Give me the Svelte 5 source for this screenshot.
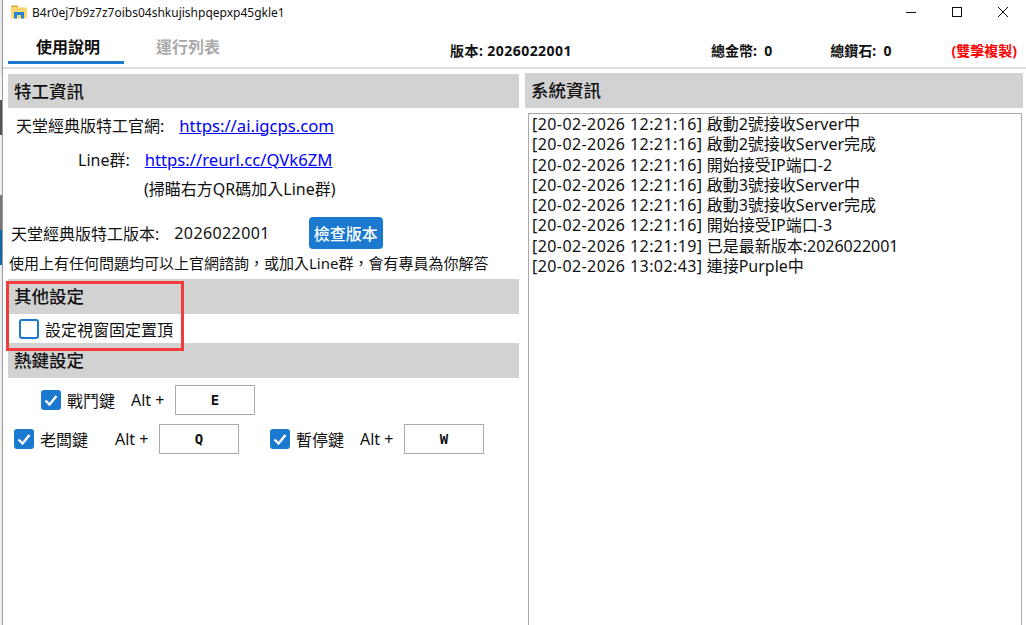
<script>
    const logs = [
        ["[20-02-2026 12:21:16]", "啟動2號接收Server中"],
        ["[20-02-2026 12:21:16]", "啟動2號接收Server完成"],
        ["[20-02-2026 12:21:16]", "開始接受IP端口-2"],
        ["[20-02-2026 12:21:16]", "啟動3號接收Server中"],
        ["[20-02-2026 12:21:16]", "啟動3號接收Server完成"],
        ["[20-02-2026 12:21:16]", "開始接受IP端口-3"],
        ["[20-02-2026 12:21:19]", "已是最新版本:2026022001"],
        ["[20-02-2026 13:02:43]", "連接Purple中"],
    ];
</script>

{#snippet check()}
    <svg class="check" width="20" height="20" viewBox="0 0 20 20">
        <rect width="20" height="20" rx="3" fill="#1b7ad0" />
        <path d="M4.5 10.5l4 4 7-8.5" fill="none" stroke="#fff" stroke-width="2.4" />
    </svg>
{/snippet}

<div class="screen">
    <div class="sliver"></div>
    <div class="window">
        <header class="titlebar">
            <svg class="folder" width="16" height="16" viewBox="0 0 16 16">
                <path d="M0 2.500a1 1 0 0 1 1-1h5l2 2h-8z" fill="#e0a526" />
                <rect x="0" y="3.500" width="16" height="11" rx="1" fill="#ffd76e" />
                <path d="M3 14.500v-6.500h10v6.500h-3v-3.500h-4v3.500z" fill="#1f86d8" />
            </svg>
            <span class="title">B4r0ej7b9z7z7oibs04shkujishpqepxp45gkle1</span>
            <div class="controls">
                <svg width="46" height="22" viewBox="0 0 46 22"><path d="M18 11.500h10" stroke="#111" fill="none" /></svg>
                <svg width="46" height="22" viewBox="0 0 46 22"><rect x="18.500" y="6.500" width="9" height="9" stroke="#111" fill="none" /></svg>
                <svg width="46" height="22" viewBox="0 0 46 22"><path d="M18 6l10 10M28 6l-10 10" stroke="#111" fill="none" /></svg>
            </div>
        </header>

        <nav class="tabs">
            <div class="tab active">使用說明</div>
            <div class="tab">運行列表</div>
            <div class="stat version">版本: 2026022001</div>
            <div class="stat gold">總金幣:&nbsp; 0</div>
            <div class="stat diamond">總鑽石:&nbsp; 0</div>
            <div class="stat copy">(雙擊複製)</div>
        </nav>

        <main class="panels">
            <section class="left">
                <h2 class="head first">特工資訊</h2>
                <div class="row site">
                    <span>天堂經典版特工官網:</span>
                    <a href="#site" class="link">https://ai.igcps.com</a>
                </div>
                <div class="row line">
                    <span>Line群:</span>
                    <a href="#line" class="link">https://reurl.cc/QVk6ZM</a>
                </div>
                <div class="row scan">(掃瞄右方QR碼加入Line群)</div>
                <div class="row ver">
                    <span>天堂經典版特工版本:</span>
                    <span class="ver-no">2026022001</span>
                    <button class="verbtn">檢查版本</button>
                </div>
                <div class="help">使用上有任何問題均可以上官網諮詢，或加入Line群，會有專員為你解答</div>

                <h2 class="head">其他設定</h2>
                <div class="row top">
                    <span class="box"></span>
                    <span>設定視窗固定置頂</span>
                </div>
                <h2 class="head">熱鍵設定</h2>

                <div class="row hot one">
                    {@render check()}
                    <span class="hk-name">戰鬥鍵</span>
                    <span class="alt">Alt +</span>
                    <div class="key">E</div>
                </div>
                <div class="row hot two">
                    {@render check()}
                    <span class="hk-name wide">老闆鍵</span>
                    <span class="alt">Alt +</span>
                    <div class="key">Q</div>
                    {@render check()}
                    <span class="hk-name">暫停鍵</span>
                    <span class="alt">Alt +</span>
                    <div class="key">W</div>
                </div>

                <div class="mark"></div>
            </section>

            <section class="right">
                <h2 class="head first">系統資訊</h2>
                <div class="log">
                    {#each logs as [ts, msg]}
                        <div><span class="ts">{ts}</span> {msg}</div>
                    {/each}
                </div>
            </section>
        </main>
    </div>
</div>

<style>
    :global(body) {
        margin: 0;
        background: #fff;
    }

    .screen {
        display: flex;
        width: 1026px;
        height: 625px;
        overflow: hidden;
        font-family: "Noto Sans", "Noto Sans CJK TC", sans-serif;
        font-size: 16px;
        color: #111;
    }

    .sliver {
        width: 2px;
        flex: none;
        border-right: 1px solid #9a9a9a;
        background: linear-gradient(
            #e8e8e8 0 75px,
            #f4f4f4 75px 100px,
            #555 100px 135px,
            #eee 135px 195px,
            #777 195px 230px,
            #1467a8 230px 265px,
            #eee 265px
        );
    }

    .window {
        flex: 1;
        display: flex;
        flex-direction: column;
        min-width: 0;
    }

    .titlebar {
        height: 22px;
        padding-top: 1px;
        display: flex;
        align-items: center;
        padding-left: 8px;
        margin-bottom: 7px;
    }

    .folder {
        margin-right: 5px;
    }

    .title {
        font-size: 12px;
    }

    .controls {
        margin-left: auto;
        display: flex;
    }

    .tabs {
        height: 39px;
        display: flex;
        align-items: center;
        border-bottom: 2px solid #ddd;
        box-sizing: border-box;
        padding-left: 5px;
    }

    .tab {
        width: 116px;
        height: 34px;
        margin-right: 5px;
        padding-left: 2px;
        box-sizing: border-box;
        line-height: 34px;
        text-align: center;
        font-size: 16px;
        font-weight: 700;
        color: #aaa;
        margin-top: -3px;
    }

    .tab.active {
        color: #111;
        border-bottom: 3px solid #1b7ad0;
        padding-left: 4px;
        margin-top: -3px;
    }

    .stat {
        font-size: 14px;
        font-weight: 700;
        margin-top: 2px;
    }

    .version {
        margin-left: 200px;
        letter-spacing: 0.45px;
    }

    .gold {
        margin-left: 139px;
    }

    .diamond {
        margin-left: 58px;
    }

    .copy {
        color: #f00;
        margin-left: 60px;
    }

    .panels {
        flex: 1;
        display: flex;
        min-height: 0;
        padding-left: 5px;
    }

    .left {
        width: 511px;
        flex: none;
        position: relative;
    }

    .right {
        width: 498px;
        margin-left: 6px;
        display: flex;
        flex-direction: column;
        min-height: 0;
    }

    .head {
        margin: 0;
        height: 35px;
        line-height: 35px;
        background: #d2d2d2;
        font-size: 17.500px;
        font-weight: 500;
        padding-left: 6px;
    }

    .left .head.first {
        margin-top: 5px;
        height: 34px;
    }

    .right .head.first {
        margin-top: 4px;
    }

    .row {
        display: flex;
        align-items: center;
    }

    .site {
        height: 34px;
        padding-left: 8px;
    }

    .site .link,
    .line .link {
        margin-left: 15px;
    }

    .line {
        height: 30px;
        padding-top: 2px;
        padding-left: 70px;
    }

    .link {
        color: #00f;
        font-size: 16.700px;
    }

    .scan {
        height: 28px;
        padding-left: 136px;
    }

    .ver {
        margin-top: 15px;
        height: 32px;
        padding-left: 3px;
    }

    .ver-no {
        margin-left: 15px;
        letter-spacing: 0.4px;
    }

    .verbtn {
        margin-left: 39px;
        width: 74px;
        height: 32px;
        border: 0;
        border-radius: 4px;
        background: #1b7ad0;
        color: #fff;
        font: inherit;
        font-weight: 500;
        padding: 0;
    }

    .help {
        height: 30px;
        line-height: 28px;
        padding-left: 1px;
        font-size: 15px;
    }

    .top {
        height: 29px;
        padding-left: 11px;
    }

    .box {
        width: 20px;
        height: 20px;
        box-sizing: border-box;
        border: 2px solid #1b7ad0;
        border-radius: 3px;
        margin-right: 6px;
    }

    .hot {
        height: 30px;
    }

    .one {
        margin-top: 7px;
        padding-left: 33px;
    }

    .two {
        margin-top: 9px;
        padding-left: 6px;
    }

    .check {
        flex: none;
        margin-right: 6px;
    }

    .hk-name {
        width: 64px;
    }

    .hk-name.wide {
        width: 75px;
    }

    .alt {
        width: 44px;
        flex: none;
    }

    .key {
        width: 80px;
        height: 30px;
        box-sizing: border-box;
        border: 1px solid #aaa;
        text-align: center;
        line-height: 28px;
        font-family: "DejaVu Sans Mono", monospace;
        font-size: 14px;
        font-weight: 700;
        margin-right: 31px;
    }

    .mark {
        position: absolute;
        left: -2px;
        top: 212px;
        width: 178px;
        height: 70px;
        box-sizing: border-box;
        border: 3px solid #f33b3b;
    }

    .log {
        flex: 1;
        margin: 5px 1px 0 3px;
        border: 1px solid #aaa;
        border-bottom: 0;
        padding: 0 3px;
        line-height: 20.300px;
        white-space: nowrap;
    }

    .ts {
        letter-spacing: 0.42px;
    }
</style>
